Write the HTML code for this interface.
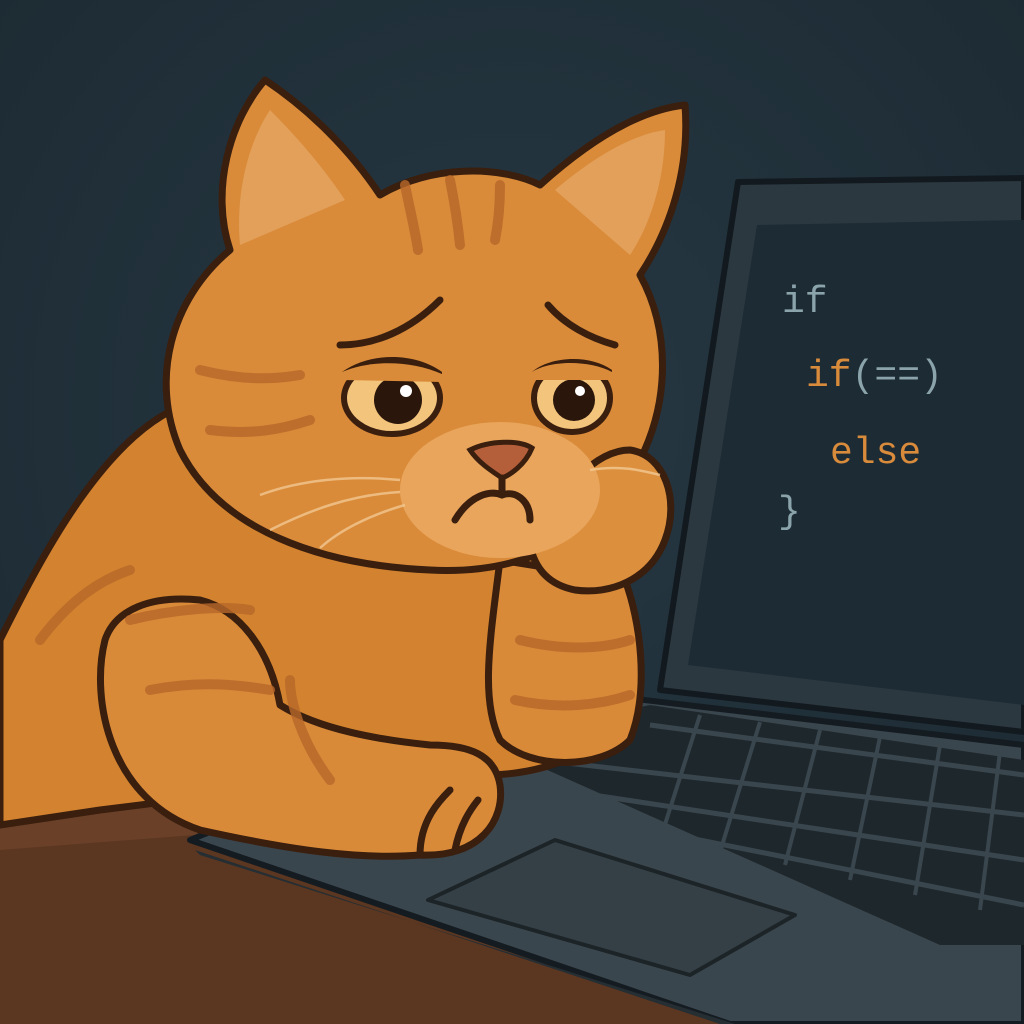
<!DOCTYPE html>
<html><head><meta charset="utf-8"><style>
html,body{margin:0;padding:0;background:#1f2d37;}
svg{display:block}
</style></head><body>
<svg width="1024" height="1024" viewBox="0 0 1024 1024" xmlns="http://www.w3.org/2000/svg">
<defs>
<radialGradient id="bg" cx="0.5" cy="0.4" r="0.8"><stop offset="0" stop-color="#263843"/><stop offset="1" stop-color="#1b2830"/></radialGradient>
</defs>
<rect width="1024" height="1024" fill="url(#bg)"/>
<!-- desk -->
<polygon points="0,815 220,790 760,1024 0,1024" fill="#5b3621"/>
<polygon points="0,815 220,790 260,830 0,850" fill="#6a4028"/>
<!-- laptop base -->
<polygon points="190,840 560,690 1024,745 1024,1024 730,1024" fill="#3a464d" stroke="#141c21" stroke-width="6" stroke-linejoin="round"/>
<polygon points="200,855 735,1024 720,1024 195,850" fill="#252e33"/>
<!-- keyboard -->
<g fill="#1e272c">
<polygon points="480,740 650,705 1024,760 1024,945 940,945"/>
</g>
<g stroke="#3a464d" stroke-width="5">
<line x1="540" y1="760" x2="1024" y2="815"/>
<line x1="560" y1="790" x2="1024" y2="860"/>
<line x1="600" y1="820" x2="1024" y2="905"/>
<line x1="650" y1="725" x2="1024" y2="775"/>
</g>
<g stroke="#3a464d" stroke-width="4">
<line x1="700" y1="715" x2="660" y2="840"/><line x1="760" y1="722" x2="720" y2="852"/>
<line x1="820" y1="730" x2="785" y2="865"/><line x1="880" y1="737" x2="850" y2="880"/>
<line x1="940" y1="745" x2="915" y2="895"/><line x1="1000" y1="752" x2="980" y2="910"/>
</g>
<!-- trackpad -->
<polygon points="428,900 555,840 795,915 690,975" fill="#354046" stroke="#1c2428" stroke-width="4" stroke-linejoin="round"/>
<!-- screen bezel -->
<polygon points="738,182 1024,178 1024,732 660,690" fill="#2c3840" stroke="#121a1f" stroke-width="6" stroke-linejoin="round"/>
<polygon points="757,225 1024,220 1024,705 688,665" fill="#1d2b34"/>
<g font-family="'Liberation Mono','DejaVu Sans Mono',monospace" font-size="38">
<text x="782" y="312" fill="#8ba3ab">if</text>
<text x="806" y="386" fill="#d98b3c">if<tspan fill="#8ba3ab">(==)</tspan></text>
<text x="830" y="463" fill="#d98b3c">else</text>
<text x="778" y="522" fill="#8ba3ab">}</text>
</g>
<!-- cat body -->
<g stroke="#3a1e0e" stroke-width="7" stroke-linejoin="round" stroke-linecap="round">
<path d="M0,640 C40,560 110,420 200,400 L560,470 C620,560 640,650 610,730 C560,780 480,780 420,770 L100,810 L0,825 Z" fill="#d3832f"/>
<!-- arm across -->
<path d="M105,640 C90,700 110,800 200,830 C290,850 360,860 420,855 C480,858 505,820 500,785 C495,755 470,745 430,745 C380,740 320,730 280,705 C270,650 240,610 200,600 C150,595 115,610 105,640 Z" fill="#d98a38"/>
<path d="M420,855 C420,820 440,800 450,790" fill="none"/>
<path d="M455,850 C460,825 470,810 478,800" fill="none"/>
<!-- chin arm -->
<path d="M500,560 C490,640 480,700 500,740 C530,770 600,770 630,740 C650,690 640,620 625,580 Z" fill="#d98a38"/>
<!-- head -->
<path d="M230,250 C210,190 230,120 265,80 C310,110 350,150 380,195 C430,165 500,165 540,185 C590,140 640,110 685,105 C690,170 670,230 640,275 C670,330 670,400 640,460 C600,540 520,575 430,570 C320,565 220,530 180,450 C150,380 170,300 230,250 Z" fill="#d98b39"/>
<!-- paw under chin -->
<path d="M530,545 C560,490 595,450 630,450 C665,455 680,500 665,540 C650,580 610,595 575,590 C550,585 535,570 530,545 Z" fill="#dc8f3d"/>
</g>
<!-- ear insides -->
<path d="M240,245 C235,190 250,140 270,110 C300,140 325,170 345,200 Z" fill="#e3a05a"/>
<path d="M555,190 C590,160 630,135 665,130 C665,180 650,225 630,255 Z" fill="#e3a05a"/>
<!-- muzzle -->
<ellipse cx="500" cy="490" rx="100" ry="68" fill="#e9a55c"/>
<!-- stripes -->
<g stroke="#b8682a" stroke-width="10" fill="none" stroke-linecap="round" opacity="0.8">
<path d="M200,370 C240,380 270,380 300,375"/>
<path d="M210,430 C250,435 280,430 310,420"/>
<path d="M405,185 C410,210 415,230 418,250"/>
<path d="M450,180 C455,205 458,225 460,245"/>
<path d="M500,185 C500,205 498,225 495,240"/>
<path d="M40,640 C70,600 100,580 130,570"/>
<path d="M130,620 C170,610 220,605 250,610"/>
<path d="M150,690 C200,680 240,685 270,690"/>
<path d="M520,640 C560,650 600,650 630,640"/>
<path d="M515,700 C560,710 600,705 630,695"/>
<path d="M330,780 C300,740 290,700 290,680"/>
</g>
<!-- eyes -->
<g stroke="#3a1e0e" stroke-width="6">
<ellipse cx="392" cy="398" rx="48" ry="36" fill="#f3c47c"/>
<ellipse cx="572" cy="398" rx="38" ry="34" fill="#f3c47c"/>
</g>
<circle cx="398" cy="400" r="24" fill="#2a160b"/>
<circle cx="574" cy="400" r="21" fill="#2a160b"/>
<circle cx="406" cy="391" r="6" fill="#fff"/>
<circle cx="580" cy="391" r="5" fill="#fff"/>
<!-- eyelids -->
<path d="M342,380 C370,362 420,360 442,380 L442,372 C415,352 370,352 342,372Z" fill="#3a1e0e"/>
<path d="M532,380 C550,365 590,362 612,378 L612,370 C590,354 550,356 532,372Z" fill="#3a1e0e"/>
<path d="M342,380 L442,382 L442,374 C410,360 370,360 342,372Z" fill="#d98b39"/>
<path d="M532,380 L612,380 L612,372 C590,360 550,360 532,372Z" fill="#d98b39"/>
<!-- eyebrows -->
<g stroke="#3a1e0e" stroke-width="7" fill="none" stroke-linecap="round">
<path d="M340,345 C375,345 410,330 440,300"/>
<path d="M548,305 C565,325 590,338 615,345"/>
<!-- nose/mouth -->
<path d="M470,450 C490,440 520,440 532,448 C525,465 510,475 502,478 C490,470 478,462 470,450 Z" fill="#b45f3a" stroke-width="5"/>
<path d="M502,478 L502,492"/>
<path d="M455,520 C470,495 490,490 502,495 C515,490 530,500 530,520"/>
</g>
<!-- whiskers -->
<g stroke="#f2c892" stroke-width="2.5" fill="none" opacity="0.8">
<path d="M400,480 C350,475 300,480 260,495"/>
<path d="M400,492 C350,495 310,510 270,530"/>
<path d="M405,505 C370,515 340,530 320,548"/>
<path d="M590,470 C620,465 640,470 660,475"/>
</g>
</svg>
</body></html>
